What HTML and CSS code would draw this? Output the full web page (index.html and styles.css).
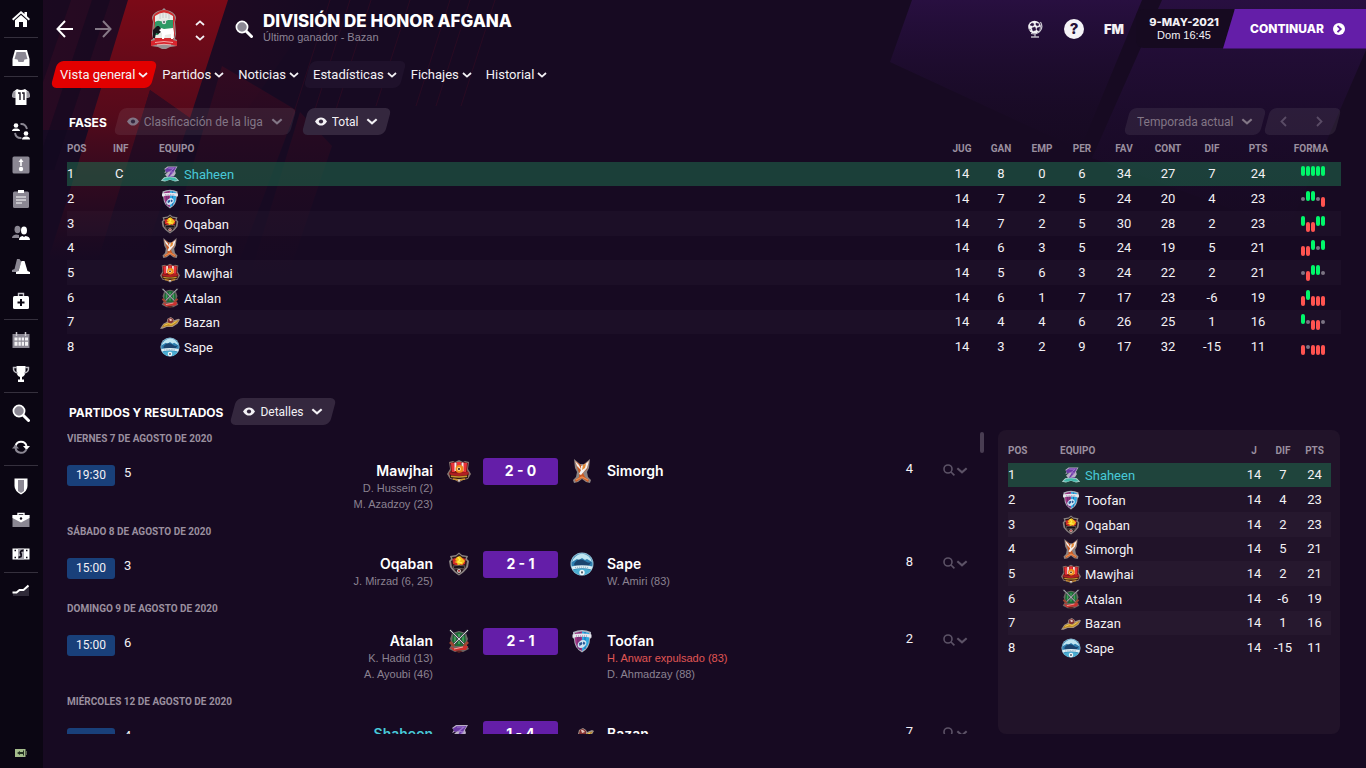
FILE: index.html
```html
<!DOCTYPE html>
<html lang="es">
<head>
<meta charset="utf-8">
<title>División de Honor Afgana</title>
<link rel="stylesheet" href="styles.css">
</head>
<body>
<svg class="defs" aria-hidden="true">
  <symbol id="chev" viewBox="0 0 10 6"><path d="M1 1l4 3.6L9 1" fill="none" stroke="currentColor" stroke-width="1.8"/></symbol>
  <symbol id="eye" viewBox="0 0 12 9"><path d="M0 4.500C2 1 4 .4 6 .4s4 .6 6 4.100C10 8 8 8.600 6 8.600S2 8 0 4.500z" fill="currentColor"/><circle cx="6" cy="4.500" r="2.100" class="eye-hole"/></symbol>
  <symbol id="mag" viewBox="0 0 18 18"><path d="M11 11l5.500 5.500" stroke="#fff" stroke-width="3" stroke-linecap="round"/><circle cx="7" cy="7" r="5.600" fill="#8b8793" stroke="#fff" stroke-width="1.700"/></symbol>
  <symbol id="maglight" viewBox="0 0 12 12"><circle cx="5" cy="5" r="4" fill="none" stroke="currentColor" stroke-width="1.600"/><path d="M8 8l3.400 3.400" stroke="currentColor" stroke-width="1.700"/></symbol>

  <symbol id="shaheen" viewBox="0 0 24 24">
    <path d="M5 6l4-3 12 0-3 5 1 3-3 5 3 2-12 1 1-4-2-2 4-4-5 2 2-3z" fill="#b9aec6"/>
    <path d="M6 6.500l4-2.500 9.500 0-3 5-5 6 6-.500-2 3-8 .500 4-6 2-3.500-6 1.500z" fill="#6b3aa5"/>
    <path d="M10 5l7 0-5 4 4 1-3 3" fill="none" stroke="#9d74cc" stroke-width="1.200"/>
    <path d="M1 20l4-4 7-1 7 1 4 4-5 1-6-2-6 2z" fill="#b5d2cf"/>
    <path d="M2.500 19.500l4-3 5.500-.6 5.500.6 4 3-5 .5-4.500-1.300-4.500 1.300z" fill="#41b8aa"/>
  </symbol>
  <symbol id="toofan" viewBox="0 0 24 24">
    <path d="M3 3q9-4 18 0l0 6-1 1q0 9-8 13.500Q4 19 4 10L3 9z" fill="#aeb0bd"/>
    <path d="M5 4q4-1.500 7-1.500V22Q5 18 5 10z" fill="#a03482"/><path d="M19 4q-4-1.500-7-1.500V22q7-4 7-12z" fill="#2da9e0"/>
    <path d="M8 4v16M10 3v18" stroke="#632c70"/><path d="M15 3v17" stroke="#2066ac"/>
    <path d="M2.500 5.500q9-2 19 0v3.300q-9.500-2-19 0z" fill="#e8e8ee"/><path d="M6 7h12" stroke="#897da0" stroke-dasharray="1 1"/>
    <ellipse cx="12" cy="15" rx="4.800" ry="3.600" transform="rotate(-38 12 15)" fill="#cfe4f2"/><path d="M9 14l3-1 0 2.500-2.500 1.500zM13.500 12.500l2 1.500-1.500 2-1.500-1.500z" fill="#2a5795"/>
  </symbol>
  <symbol id="oqaban" viewBox="0 0 24 24">
    <path d="M12 .5l3 2.500 6 1-1 3 2 2-1 6q-3 5-9 8.500Q6 20 3 15L2 9l2-2-1-3 6-1z" fill="#8a8382"/>
    <path d="M12 2l3 2.500 4 .5-1 3 2 1-1 6q-3 4-7 7-4-3-7-7L4 9l2-1-1-3 4-.5z" fill="#28171a"/>
    <path d="M5.500 7L11 5v9l-5-2zM18.500 7L13 5v9l5-2z" fill="#cf2b29"/>
    <path d="M8 8l2-3 3-1 3 3 2 2-3 4-1-1-3 2-1-3-3-1 3-1z" fill="#f3bf1a"/><path d="M11 5l2 3-2 2 4 1" fill="none" stroke="#fff04c" stroke-width="1.300"/>
    <path d="M6 14q6-1.500 12 0l-1 3q-5-1.500-10 0z" fill="#151018" stroke="#8f8078" stroke-width=".6"/>
    <circle cx="12" cy="19" r="2" fill="#d5cdcb"/><path d="M11 18l2 0-.5 2-1 0z" fill="#b42a2a"/>
  </symbol>
  <symbol id="simorgh" viewBox="0 0 24 24">
    <path d="M4 0l6 5h4l6-5-1 9-2 4 1 5 3 3-1 3-4-1-4-3-4 3-4 1-1-3 3-3 1-5-2-4z" fill="#8f8482"/>
    <path d="M5 2l6 4 1 4 1-4 6-4-2 8-4 4 2 4 4 3-1 2-6-4-6 4-1-2 4-3 0-4z" fill="#c95a24"/>
    <path d="M5 2l4 4 2 4 0-3 3-1 5-4-2 7-6 7-2-1 2-4-4-4z" fill="#f4f1f0"/>
    <path d="M13 6l3-1-1 4-3 2z" fill="#e58a35"/><path d="M6 21l6-3 6 3" fill="none" stroke="#f08b4d" stroke-width="1.300"/>
  </symbol>
  <symbol id="mawjhai" viewBox="0 0 24 24">
    <path d="M2 3l4-1 2 1 4-2 4 2 2-1 4 1-1 7 3 5-3 5-5 1-4 2.500L8 21l-5-1-3-5 3-5z" fill="#85756e"/>
    <path d="M3 4l4-1 5 0 5 0 4 1-1 7 2 4-2 4-8 3-8-3-2-4 2-4z" fill="#7b1618"/>
    <path d="M4 4h4v9H5zM10 3h4v9h-4zM16 4h4l-1 9h-3z" fill="#e93338"/><path d="M7.500 3.500h2V12h-2zM14.500 3.500h2V12h-2z" fill="#f6eeee"/>
    <circle cx="12.500" cy="10" r="4" fill="#ef8c1b"/><circle cx="12" cy="10" r="2" fill="#ffd98a"/><circle cx="12" cy="10" r="1" fill="#241018"/>
    <path d="M2 13q5 2 10 1t10-1l-3 4H5z" fill="#b02021"/><path d="M3 16q9 2 18 0v3q-9 2-18 0z" fill="#2a1a12"/><path d="M4 17.200q8 1.600 16 0M6 20l6 1 6-1" fill="none" stroke="#c9952e" stroke-width="1.400"/><path d="M10.500 20.500h3l-1.500 2.500z" fill="#d9d4d4"/>
  </symbol>
  <symbol id="atalan" viewBox="0 0 24 24">
    <path d="M5 4l7-2 7 2 2 6-2 5 3 5-6 3h-8l-6-3 3-5-2-5z" fill="#6d6765"/>
    <path d="M6 5l6-2 6 2 1 7-3 5H8l-3-5z" fill="#1d6a36"/><path d="M8 5v10M12 5v10M16 5v10" stroke="#3fa75a" stroke-width="1.700"/>
    <path d="M3 1l15 15M21 1L6 16" stroke="#464951" stroke-width="2.200"/><path d="M3 1l15 15M21 1L6 16" stroke="#d2d2d6" stroke-width="1"/>
    <path d="M3 13l4 4M21 13l-4 4" stroke="#9e4630" stroke-width="2.500"/>
    <path d="M3 18l5 1 10-2 3 0-2 4-4 0-8 1z" fill="#cf2f2d"/><path d="M7 20l9-2" stroke="#f3b7ac" stroke-width=".9"/><path d="M8 22q4-1 8 0l-4 2z" fill="#5c211f"/>
  </symbol>
  <symbol id="bazan" viewBox="0 0 24 24">
    <path d="M0 20l4-6 4-2 1-4 4-2 3 2 1 2 5-2 2 1-3 5-6 4-7 0-5 2z" fill="#a4958a"/>
    <path d="M9 12l1-4 3-1 3 2 0 3-4 2z" fill="#833030"/><path d="M11 8l2 0 2 2-3 1z" fill="#e8c7be"/>
    <path d="M2 18.500l3-4 5-1.500 4 1 4-3 5-1.500-4 4.500-5 3-6 0z" fill="#bd8a24"/><path d="M5 16l5-2 4 1 6-4" fill="none" stroke="#f0cd51" stroke-width="1.200"/>
  </symbol>
  <symbol id="sape" viewBox="0 0 24 24">
    <circle cx="12" cy="12" r="11.500" fill="#8dbdd2"/><circle cx="12" cy="12" r="10.500" fill="#2e7fb0"/>
    <path d="M2 10q2-7 10-8.500 8 1 10 8.500l-5-3-2 1-3-2-3 2-2-1z" fill="#bfe6f2"/>
    <path d="M4 12q4-7 11-3 4 3 6 1-1 5-9 5Q4 15 4 12z" fill="#1b446e"/>
    <path d="M1.500 14.500q10.500-2.500 21 0l-1 3q-9.500-2.500-19 0z" fill="#dceef4"/><path d="M5 15.700q7-1.200 14 0" fill="none" stroke="#7fa2b7" stroke-dasharray="1 1"/>
    <path d="M3 18q9-2.500 18 0-3 5-9 5t-9-5z" fill="#4aaed2"/><circle cx="12" cy="20.500" r="2.700" fill="#eef6f9"/><path d="M11 19.500h2l-.5 2h-1z" fill="#234"/>
  </symbol>
</svg>

<div class="app">
  <svg class="backdrop backdrop-left" width="640" height="360" aria-hidden="true">
    <defs>
      <linearGradient id="redFade" x1="0" y1="0" x2="0" y2="1"><stop offset="0" stop-color="#7b0a17"/><stop offset=".45" stop-color="#5a0a1a" stop-opacity=".9"/><stop offset="1" stop-color="#3d0a1e" stop-opacity="0"/></linearGradient>
      <linearGradient id="wineFade" x1="0" y1="0" x2="0" y2="1"><stop offset="0" stop-color="#3a0a20" stop-opacity=".75"/><stop offset="1" stop-color="#250a20" stop-opacity="0"/></linearGradient>
      <linearGradient id="glow" x1="0" y1="0" x2="1" y2="0"><stop offset="0" stop-color="#2c0a22" stop-opacity=".8"/><stop offset="1" stop-color="#2c0a22" stop-opacity="0"/></linearGradient>
    </defs>
    <path d="M43 0h280l-90 130H43z" fill="url(#glow)"/>
    <path d="M43 0h28L43 82zM92 0h18L54 170H43v-22z" fill="#10091f" opacity=".55"/>
    <path d="M128 0h100l-38 118-40-28-52 170H48l19-60z" fill="url(#redFade)"/>
    <path d="M150 90l40 28-46 140H98z" fill="url(#wineFade)"/>
    <path d="M222 66l74 44-60 160h-74zM300 112l32 34-44 130h-38z" fill="url(#wineFade)"/>
    <path d="M330 0l-40 125M350 0l-40 125M371 0l-40 125M410 0l-34 106M450 0l-34 106M470 0l-34 106M495 0l-34 106" stroke="#3b0c24" opacity=".5"/>
  </svg>
  <svg class="backdrop backdrop-right" width="480" height="240" aria-hidden="true">
    <defs><linearGradient id="violetFade" x1="0" y1="0" x2="0" y2="1"><stop offset="0" stop-color="#280f40"/><stop offset="1" stop-color="#1b0b2b" stop-opacity="0"/></linearGradient></defs>
    <path d="M26 0h230l-62 150L4 62z" fill="url(#violetFade)"/>
    <path d="M276 0h204v50l-78 180L206 158z" fill="url(#violetFade)"/>
  </svg>

  <nav class="rail" aria-label="Principal">
    <a class="rail-item" href="#" aria-label="Inicio"><svg width="18" height="18" viewBox="0 0 18 18"><path d="M9 1L0 9l1.300 1.400L9 3.600l7.700 6.800L18 9l-3-2.700V2h-2.500v2z" fill="#fff"/><path d="M9 5l-6 5.300V17h4v-5h4v5h4v-6.700z" fill="#fff"/></svg></a>
    <hr>
    <a class="rail-item" href="#" aria-label="Bandeja de entrada"><svg width="18" height="18" viewBox="0 0 18 18"><path d="M3 1h12l2.500 9v7H.5v-7z" fill="#fff"/><path d="M4.500 3h9l2 7-3 .5-1 2.500h-5l-1-2.500-3-.5z" fill="#8b8793"/></svg></a>
    <hr>
    <a class="rail-item" href="#" aria-label="Plantilla"><svg width="18" height="18" viewBox="0 0 18 18"><path d="M5 1q4 2 8 0l4 3 1 5-3.500 1V17h-11v-7L0 9l1-5z" fill="#fff"/><path d="M1 4l2.500-1v7L0 9zM17 4l-2.500-1v7L18 9z" fill="#9a97a0"/><path d="M6 5h2v7M10 5h2v7" fill="none" stroke="#1b1622" stroke-width="1.400"/></svg></a>
    <a class="rail-item" href="#" aria-label="Dinámica"><svg width="18" height="18" viewBox="0 0 18 18"><circle cx="4" cy="3.500" r="2.300" fill="#fff"/><path d="M0 9q0-2 3-2.500h2Q8 7 8 9z" fill="#fff"/><circle cx="14" cy="11.500" r="2.300" fill="#fff"/><path d="M10 17.500q0-2.500 3-3h2q3 .5 3 3z" fill="#fff"/><path d="M8.500 2q5-.5 6.500 5M9.500 16Q4 16.500 3 11" fill="none" stroke="#8b8793" stroke-width="1.900"/></svg></a>
    <a class="rail-item" href="#" aria-label="Tácticas"><svg width="18" height="18" viewBox="0 0 18 18"><rect x=".5" y=".5" width="17" height="17" rx="1.500" fill="#8b8793"/><path d="M9 10V5" stroke="#fff" stroke-width="1.600"/><path d="M6.500 6L9 2.500 11.500 6z" fill="#fff"/><circle cx="9" cy="13" r="2.200" fill="#fff"/></svg></a>
    <a class="rail-item" href="#" aria-label="Informe"><svg width="18" height="18" viewBox="0 0 18 18"><rect x="1" y="1.500" width="16" height="16.500" rx="1.500" fill="#8b8793"/><path d="M6 0h6v3H6z" fill="#fff"/><path d="M4 7h10M4 10h10M4 13h6" stroke="#fff" stroke-width="1.200"/></svg></a>
    <a class="rail-item" href="#" aria-label="Personal"><svg width="18" height="18" viewBox="0 0 18 18"><ellipse cx="5.500" cy="5.500" rx="3" ry="3.700" fill="#8b8793"/><path d="M0 14q0-3 4-3.500l3 .5v3z" fill="#8b8793"/><ellipse cx="12" cy="6.500" rx="3" ry="3.900" fill="#fff"/><path d="M7 16q0-3.500 3.500-4l1.500 1 1.500-1Q18 12.500 18 16z" fill="#fff"/></svg></a>
    <a class="rail-item" href="#" aria-label="Entrenamiento"><svg width="18" height="18" viewBox="0 0 18 18"><path d="M5 1h2.500l2 3L6 14H0v-2l2.500-1z" fill="#8b8793"/><path d="M9.500 3h3l3 10 2.500 1v2H4v-2l2.500-1z" fill="#fff"/></svg></a>
    <a class="rail-item" href="#" aria-label="Centro médico"><svg width="18" height="18" viewBox="0 0 18 18"><path d="M6.500 4V1.500h5V4" fill="none" stroke="#c9c7cd" stroke-width="1.400"/><rect x="1" y="4" width="16" height="13" rx="1.500" fill="#fff"/><path d="M9 7v7M5.500 10.500h7" stroke="#0b0613" stroke-width="2"/></svg></a>
    <hr>
    <a class="rail-item" href="#" aria-label="Calendario"><svg width="18" height="18" viewBox="0 0 18 18"><path d="M.5 3h17v14H.5z" fill="#8b8793"/><path d="M4.500 1v4M13.500 1v4" stroke="#c9c7cd" stroke-width="1.500"/><path d="M2.500 6.500h3v3h-3zM6.500 6.500h2.300v3H6.500zM9.700 6.500H12v3H9.700zM13 6.500h3v3h-3zM2.500 10.700h3v4h-3zM6.500 10.700h2.300v4H6.500zM9.700 10.700H12v4H9.700zM13 10.700h3v4h-3z" fill="#f2f1f3"/></svg></a>
    <a class="rail-item" href="#" aria-label="Competiciones"><svg width="18" height="18" viewBox="0 0 18 18"><path d="M4.500 1h9v5q0 5-3.500 6v2.500h2V17H6v-2.500h2V12Q4.500 11 4.500 6z" fill="#fff"/><path d="M5 2.500H1.500Q1 7.500 6 8M13 2.500h3.500Q17 7.500 12 8" fill="none" stroke="#bdbbc2" stroke-width="1.500"/></svg></a>
    <hr>
    <a class="rail-item" href="#" aria-label="Ojeo"><svg width="18" height="18"><use href="#mag"/></svg></a>
    <a class="rail-item" href="#" aria-label="Traspasos"><svg width="18" height="18" viewBox="0 0 18 18"><path d="M3.500 8A5.700 5.700 0 0 1 14.500 8" fill="none" stroke="#fff" stroke-width="2"/><path d="M11 8h7l-3.500 4z" fill="#fff"/><path d="M14.500 11A5.700 5.700 0 0 1 3.500 10" fill="none" stroke="#8b8793" stroke-width="2"/><path d="M0 10.500h7L3.500 6.500z" fill="#8b8793"/></svg></a>
    <hr>
    <a class="rail-item" href="#" aria-label="Club"><svg width="18" height="18" viewBox="0 0 18 18"><path d="M2.500 1.500h13V9q0 5-6.500 8.500Q2.500 14 2.500 9z" fill="#fff"/><path d="M6 3h6v11l-3 2-3-2z" fill="#8b8793"/></svg></a>
    <a class="rail-item" href="#" aria-label="Directiva"><svg width="18" height="18" viewBox="0 0 18 18"><path d="M.5 4h17v12H.5z" fill="#8b8793"/><path d="M.5 4h17v3L9 11.500.5 7z" fill="#fff"/><path d="M6 4V2.500h6V4" fill="none" stroke="#fff" stroke-width="1.400"/><circle cx="9" cy="7.500" r="1.200" fill="#0b0613"/></svg></a>
    <a class="rail-item" href="#" aria-label="Finanzas"><svg width="18" height="18" viewBox="0 0 18 18"><path d="M.5 3.500h17v11H.5z" fill="#fff"/><path d="M6 3.500h6v11H6z" fill="#aaa8b0"/><path d="M11.500 5.500Q8 5.500 8.500 8q1.500 1.500.5 3.500L6.500 12.500" fill="none" stroke="#0b0613" stroke-width="1.800"/><path d="M2.500 5.500h1.500M2.500 12.500h1.500M14 5.500h1.500M14 12.500h1.500" stroke="#0b0613" stroke-width="1.500"/></svg></a>
    <hr>
    <a class="rail-item" href="#" aria-label="Desarrollo"><svg width="18" height="18" viewBox="0 0 18 18"><path d="M1 9l4-1 3-3 4 0 5-3v10H1z" fill="#2f2a38"/><path d="M.5 8.500h4l3-2.500h4l5-4.500" fill="none" stroke="#fff" stroke-width="2"/></svg></a>
    <a class="rail-item rail-foot" href="#" aria-label="Estado"><svg width="12" height="8" viewBox="0 0 12 8"><path d="M0 0h10.500v8H0z" fill="#a5bd8c"/><path d="M11 2h1v4h-1z" fill="#56604e"/><path d="M2 4l3-2v1h3V1.500h1v5H8V5H5v1z" fill="#223020"/></svg></a>
  </nav>

  <main class="page">
    <header class="top">
      <button class="plain" aria-label="Atrás"><svg width="18" height="18" viewBox="0 0 18 18"><path d="M17 9H2M9 1L1.500 9 9 17" fill="none" stroke="#fff" stroke-width="2"/></svg></button>
      <button class="plain dim" aria-label="Adelante"><svg width="18" height="18" viewBox="0 0 18 18"><path d="M1 9h15M9 1l7.500 8L9 17" fill="none" stroke="#fff" stroke-width="2"/></svg></button>
      <svg class="league" width="28" height="42" viewBox="0 0 28 42" aria-hidden="true">
        <path d="M8 3l4-1 2-2 2 2 4 1q6 3 6 7l-1 4 1 12-1 5 2 1v6l-7 1-4 2h-4l-4-2-7-1v-6l2-1-1-5 1-12-1-4q0-4 6-7z" fill="#9a9192"/>
        <path d="M8 4q6-4 12 0 5 2 5 7l-1 4 1 12-2 5H5l-2-5 1-12-1-4q0-5 5-7z" fill="#cf2d2f"/>
        <path d="M5 8q9-7 18 0v8l1 14H4l1-14z" fill="#e9ebe7"/><path d="M5 14q3-2 5-1l4 1 4-2 5 0v9H12l-4 6H4z" fill="#2f9a66"/>
        <path d="M10 6v5M13 5v5M16 5v5M19 6v5" stroke="#c9c9cb"/><circle cx="14" cy="14" r="2.200" fill="#dfe3e2"/><circle cx="14" cy="14" r="1" fill="#555c60"/>
        <path d="M7 21l4-1 3 1 9-1 1 5-1 6h-2v-5l-6 1-1 4h-2v-6l-3-1z" fill="#fff"/><path d="M3 30v-8l4-4 2 0 2 3-2 1 2 2-3 2-2-1-1 5z" fill="#16161a"/>
        <path d="M1 33q13-4 26 0v5q-13-4-26 0z" fill="#d8252d"/><path d="M5 34.500q9-2 18 0M7 37q7-1.500 14 0" fill="none" stroke="#f4b4b2" stroke-width=".9"/>
      </svg>
      <span class="steps">
        <button class="plain" aria-label="Anterior"><svg class="flip" width="10" height="6"><use href="#chev"/></svg></button>
        <button class="plain" aria-label="Siguiente"><svg width="10" height="6"><use href="#chev"/></svg></button>
      </span>
      <button class="plain find" aria-label="Buscar"><svg width="18" height="18"><use href="#mag"/></svg></button>
      <div class="heading"><h1>DIVISIÓN DE HONOR AFGANA</h1><p>Último ganador - Bazan</p></div>
      <div class="tools">
        <button class="plain" aria-label="Mundo"><svg width="18" height="18" viewBox="0 0 18 18"><circle cx="8.500" cy="7" r="6.300" fill="#f2f1f4"/><path d="M4 5l2-2 2 1-1 2zM10 3l3 1-1 2-2-1zM6 8l3-1 1 3-3 1zM11 8l3-1-1 4-2-1zM3 9l2 1" fill="#2a1540" stroke="#2a1540" stroke-width=".5"/><path d="M14.500 2q3 5-.5 9-3 4-9 2.500" fill="none" stroke="#cfcbd4" stroke-width="1.200"/><path d="M9 13.500V17M5 17h8" stroke="#b9b4c0" stroke-width="1.300"/></svg></button>
        <button class="plain help">?</button>
        <button class="plain fm">FM</button>
      </div>
      <div class="date"><strong>9-MAY-2021</strong><span>Dom 16:45</span></div>
      <button class="continue">CONTINUAR <svg width="12" height="12" viewBox="0 0 12 12"><circle cx="6" cy="6" r="6" fill="#fff"/><path d="M4.500 2.800L7.800 6 4.500 9.200" fill="none" stroke="#641ea8" stroke-width="1.800"/></svg></button>
    </header>

    <nav class="tabs" aria-label="Secciones">
      <button class="tab active">Vista general<svg width="10" height="6"><use href="#chev"/></svg></button>
      <button class="tab">Partidos<svg width="10" height="6"><use href="#chev"/></svg></button>
      <button class="tab">Noticias<svg width="10" height="6"><use href="#chev"/></svg></button>
      <button class="tab hover">Estadísticas<svg width="10" height="6"><use href="#chev"/></svg></button>
      <button class="tab">Fichajes<svg width="10" height="6"><use href="#chev"/></svg></button>
      <button class="tab">Historial<svg width="10" height="6"><use href="#chev"/></svg></button>
    </nav>

    <section class="stage">
      <div class="bar">
        <h2>FASES</h2>
        <label class="pick off"><svg width="12" height="9"><use href="#eye"/></svg><select aria-label="Fase" disabled><option>Clasificación de la liga</option></select><svg width="12" height="7"><use href="#chev"/></svg></label>
        <label class="pick on"><svg width="12" height="9"><use href="#eye"/></svg><select aria-label="Ámbito"><option>Total</option></select><svg width="12" height="7"><use href="#chev"/></svg></label>
        <label class="pick off season"><select aria-label="Temporada" disabled><option>Temporada actual</option></select><svg width="12" height="7"><use href="#chev"/></svg></label>
        <span class="pager"><button class="plain" aria-label="Temporada anterior" disabled><svg width="7" height="11" viewBox="0 0 7 11"><path d="M6 1L1.500 5.500 6 10" fill="none" stroke="currentColor" stroke-width="1.800"/></svg></button><button class="plain" aria-label="Temporada siguiente" disabled><svg width="7" height="11" viewBox="0 0 7 11"><path d="M1 1l4.500 4.500L1 10" fill="none" stroke="currentColor" stroke-width="1.800"/></svg></button></span>
      </div>
      <table class="league-table full">
        <colgroup><col class="c46"><col class="c46"><col><col class="c38"><col class="c40"><col class="c42"><col class="c38"><col class="c46"><col class="c42"><col class="c46"><col class="c46"><col class="c60"></colgroup>
        <thead><tr><th>POS</th><th>INF</th><th class="team">EQUIPO</th><th>JUG</th><th>GAN</th><th>EMP</th><th>PER</th><th>FAV</th><th>CONT</th><th>DIF</th><th>PTS</th><th>FORMA</th></tr></thead>
        <tbody>
          <tr class="mine"><td>1</td><td>C</td><td class="team"><svg><use href="#shaheen"/></svg>Shaheen</td><td>14</td><td>8</td><td>0</td><td>6</td><td>34</td><td>27</td><td>7</td><td>24</td><td><span class="form"><i class="w"></i><i class="w"></i><i class="w"></i><i class="w"></i><i class="w"></i></span></td></tr>
          <tr><td>2</td><td></td><td class="team"><svg><use href="#toofan"/></svg>Toofan</td><td>14</td><td>7</td><td>2</td><td>5</td><td>24</td><td>20</td><td>4</td><td>23</td><td><span class="form"><i class="d"></i><i class="w"></i><i class="w"></i><i class="d"></i><i class="l"></i></span></td></tr>
          <tr><td>3</td><td></td><td class="team"><svg><use href="#oqaban"/></svg>Oqaban</td><td>14</td><td>7</td><td>2</td><td>5</td><td>30</td><td>28</td><td>2</td><td>23</td><td><span class="form"><i class="w"></i><i class="l"></i><i class="l"></i><i class="w"></i><i class="w"></i></span></td></tr>
          <tr><td>4</td><td></td><td class="team"><svg><use href="#simorgh"/></svg>Simorgh</td><td>14</td><td>6</td><td>3</td><td>5</td><td>24</td><td>19</td><td>5</td><td>21</td><td><span class="form"><i class="l"></i><i class="l"></i><i class="w"></i><i class="d"></i><i class="w"></i></span></td></tr>
          <tr><td>5</td><td></td><td class="team"><svg><use href="#mawjhai"/></svg>Mawjhai</td><td>14</td><td>5</td><td>6</td><td>3</td><td>24</td><td>22</td><td>2</td><td>21</td><td><span class="form"><i class="d"></i><i class="l"></i><i class="w"></i><i class="w"></i><i class="d"></i></span></td></tr>
          <tr><td>6</td><td></td><td class="team"><svg><use href="#atalan"/></svg>Atalan</td><td>14</td><td>6</td><td>1</td><td>7</td><td>17</td><td>23</td><td>-6</td><td>19</td><td><span class="form"><i class="l"></i><i class="w"></i><i class="l"></i><i class="l"></i><i class="l"></i></span></td></tr>
          <tr><td>7</td><td></td><td class="team"><svg><use href="#bazan"/></svg>Bazan</td><td>14</td><td>4</td><td>4</td><td>6</td><td>26</td><td>25</td><td>1</td><td>16</td><td><span class="form"><i class="w"></i><i class="d"></i><i class="l"></i><i class="l"></i><i class="d"></i></span></td></tr>
          <tr><td>8</td><td></td><td class="team"><svg><use href="#sape"/></svg>Sape</td><td>14</td><td>3</td><td>2</td><td>9</td><td>17</td><td>32</td><td>-15</td><td>11</td><td><span class="form"><i class="l"></i><i class="d"></i><i class="l"></i><i class="l"></i><i class="l"></i></span></td></tr>
        </tbody>
      </table>
    </section>

    <section class="results">
      <div class="bar">
        <h2>PARTIDOS Y RESULTADOS</h2>
        <label class="pick on"><svg width="12" height="9"><use href="#eye"/></svg><select aria-label="Vista de partidos"><option>Detalles</option></select><svg width="12" height="7"><use href="#chev"/></svg></label>
      </div>
      <div class="split">
        <div class="fixtures">
          <div class="list">
            <h3>VIERNES 7 DE AGOSTO DE 2020</h3>
            <article class="match">
              <span class="time">19:30</span><span class="tv">5</span>
              <div class="side home"><b>Mawjhai</b><span>D. Hussein (2)</span><span>M. Azadzoy (23)</span></div>
              <svg class="crest"><use href="#mawjhai"/></svg><a class="score" href="#">2 - 0</a><svg class="crest"><use href="#simorgh"/></svg>
              <div class="side"><b>Simorgh</b></div>
              <span class="crowd">4</span><button class="plain more" aria-label="Más opciones"><svg width="12" height="12"><use href="#maglight"/></svg><svg width="12" height="7"><use href="#chev"/></svg></button>
            </article>
            <h3>SÁBADO 8 DE AGOSTO DE 2020</h3>
            <article class="match">
              <span class="time">15:00</span><span class="tv">3</span>
              <div class="side home"><b>Oqaban</b><span>J. Mirzad (6, 25)</span></div>
              <svg class="crest"><use href="#oqaban"/></svg><a class="score" href="#">2 - 1</a><svg class="crest"><use href="#sape"/></svg>
              <div class="side"><b>Sape</b><span>W. Amiri (83)</span></div>
              <span class="crowd">8</span><button class="plain more" aria-label="Más opciones"><svg width="12" height="12"><use href="#maglight"/></svg><svg width="12" height="7"><use href="#chev"/></svg></button>
            </article>
            <h3>DOMINGO 9 DE AGOSTO DE 2020</h3>
            <article class="match">
              <span class="time">15:00</span><span class="tv">6</span>
              <div class="side home"><b>Atalan</b><span>K. Hadid (13)</span><span>A. Ayoubi (46)</span></div>
              <svg class="crest"><use href="#atalan"/></svg><a class="score" href="#">2 - 1</a><svg class="crest"><use href="#toofan"/></svg>
              <div class="side"><b>Toofan</b><span class="red">H. Anwar expulsado (83)</span><span>D. Ahmadzay (88)</span></div>
              <span class="crowd">2</span><button class="plain more" aria-label="Más opciones"><svg width="12" height="12"><use href="#maglight"/></svg><svg width="12" height="7"><use href="#chev"/></svg></button>
            </article>
            <h3>MIÉRCOLES 12 DE AGOSTO DE 2020</h3>
            <article class="match">
              <span class="time"></span><span class="tv">4</span>
              <div class="side home own"><b>Shaheen</b></div>
              <svg class="crest"><use href="#shaheen"/></svg><a class="score" href="#">1 - 4</a><svg class="crest"><use href="#bazan"/></svg>
              <div class="side"><b>Bazan</b></div>
              <span class="crowd">7</span><button class="plain more" aria-label="Más opciones"><svg width="12" height="12"><use href="#maglight"/></svg><svg width="12" height="7"><use href="#chev"/></svg></button>
            </article>
          </div>
          <div class="track"><div class="thumb"></div></div>
        </div>
        <aside class="panel">
          <table class="league-table mini">
            <colgroup><col class="c52"><col><col class="c28"><col class="c30"><col class="c33"></colgroup>
            <thead><tr><th>POS</th><th class="team">EQUIPO</th><th>J</th><th>DIF</th><th>PTS</th></tr></thead>
            <tbody>
              <tr class="mine"><td>1</td><td class="team"><svg><use href="#shaheen"/></svg>Shaheen</td><td>14</td><td>7</td><td>24</td></tr>
              <tr><td>2</td><td class="team"><svg><use href="#toofan"/></svg>Toofan</td><td>14</td><td>4</td><td>23</td></tr>
              <tr><td>3</td><td class="team"><svg><use href="#oqaban"/></svg>Oqaban</td><td>14</td><td>2</td><td>23</td></tr>
              <tr><td>4</td><td class="team"><svg><use href="#simorgh"/></svg>Simorgh</td><td>14</td><td>5</td><td>21</td></tr>
              <tr><td>5</td><td class="team"><svg><use href="#mawjhai"/></svg>Mawjhai</td><td>14</td><td>2</td><td>21</td></tr>
              <tr><td>6</td><td class="team"><svg><use href="#atalan"/></svg>Atalan</td><td>14</td><td>-6</td><td>19</td></tr>
              <tr><td>7</td><td class="team"><svg><use href="#bazan"/></svg>Bazan</td><td>14</td><td>1</td><td>16</td></tr>
              <tr><td>8</td><td class="team"><svg><use href="#sape"/></svg>Sape</td><td>14</td><td>-15</td><td>11</td></tr>
            </tbody>
          </table>
        </aside>
      </div>
    </section>
  </main>
</div>
</body>
</html>
```
FILE: styles.css
```css
* { box-sizing: border-box; }
body {
  margin: 0;
  background: #170a22;
  color: #f3f1f5;
  font: 13px/16px Roboto, "Liberation Sans", sans-serif;
}
h1, h2, h3, p { margin: 0; }
button, select { font: inherit; color: inherit; border: 0; background: none; padding: 0; margin: 0; opacity: 1; }
.defs { display: none; }
.plain { display: inline-flex; align-items: center; justify-content: center; }

.app { position: relative; display: flex; height: 100vh; overflow: hidden; }
.backdrop { position: absolute; top: 0; }
.backdrop-left { left: 0; }
.backdrop-right { right: 0; }

/* side rail */
.rail { position: relative; flex: 0 0 43px; display: flex; flex-direction: column; padding-top: 2px; background: #0b0613; }
.rail-item { flex: 0 0 34px; display: flex; align-items: center; justify-content: center; padding-right: 2px; }
.rail hr { width: 34px; height: 1px; margin: 1px 0 3px 4px; border: 0; background: #35303d; }
.rail-foot { flex-basis: 30px; margin-top: auto; }

.page { position: relative; flex: 1; min-width: 0; display: flex; flex-direction: column; padding-bottom: 34px; }

/* header */
.top { display: flex; align-items: center; height: 57px; padding-left: 13px; }
.top .plain { flex: none; }
.dim { margin-left: 20px; opacity: .45; }
.league { margin-left: 38px; flex: none; }
.steps { display: flex; flex-direction: column; gap: 9px; margin: 4px 0 0 17px; }
.flip { transform: rotate(180deg); }
.find { margin-left: 30px; }
.heading { flex: 1; margin: 0 0 2px 10px; white-space: nowrap; }
.heading h1 { font: 800 17px/18px Inter, sans-serif; color: #fff; }
.heading p { color: #8d8495; font: 11px/14px "Liberation Sans", sans-serif; }
.tools { display: flex; align-items: center; gap: 20px; margin-right: 12px; }
.help { width: 20px; height: 20px; border-radius: 50%; background: #f5f3f7; color: #241035; font: 800 15px/20px Inter, sans-serif; }
.fm { font: 900 13px/16px Inter, sans-serif; }
.date { display: flex; flex-direction: column; align-items: center; justify-content: center; width: 98px; height: 39px; margin-right: -11px; padding-right: 2px; border-radius: 8px 0 0 8px; background: #160a20; font: 11px/13px "Liberation Sans", sans-serif; }
.date strong { font: 800 11px/13px Inter, sans-serif; }
.continue { display: flex; align-items: center; justify-content: center; gap: 9px; height: 40px; width: 143px; padding-left: 6px; background: #641ea8; color: #fff; font: 800 12px/16px Inter, sans-serif; clip-path: polygon(12px 0, 100% 0, 100% 100%, 0 100%); }

/* section tabs */
.tabs { display: flex; margin-top: 4px; padding-left: 10px; }
.tab { position: relative; z-index: 0; display: flex; align-items: center; gap: 3px; height: 27px; padding: 0 7px; }
.active::before, .hover::before, .pick::before, .pager::before {
  content: ""; position: absolute; z-index: -1; inset: 0 3px 0 3px; border-radius: 6px; transform: skewX(-15deg);
}
.active::before, .hover::before { inset: 0 1px; }
.active::before { background: #e20000; }
.hover::before { background: #1f112b; }

/* section bars */
.bar { display: flex; align-items: center; height: 27px; padding: 0 1px 0 2px; }
.bar h2 { font: 700 12px/16px Inter, sans-serif; color: #fff; padding-top: 2px; }
.pick { position: relative; z-index: 0; display: flex; align-items: center; gap: 5px; height: 27px; margin-left: 8px; padding: 0 12px; font: 12px/16px Roboto, sans-serif; }
.pick::before { inset: 0 2px; }
.pick select { appearance: none; }
.pick select + svg { margin-left: 2px; }
.eye-hole { fill: #34273e; }
.on::before { background: #34273e; }
.off { color: #827686; }
.off::before { background: rgba(255, 255, 255, .07); }
.pager { position: relative; z-index: 0; display: flex; height: 27px; padding-right: 3px; color: #5a4c66; }
.pager::before { inset: 0 2px; background: rgba(255, 255, 255, .07); }
.pager .plain { width: 36px; }
.stage .season { margin-left: auto; }

/* tables */
.stage { margin: 20px 25px 0 24px; }
.league-table { width: 100%; table-layout: fixed; border-collapse: separate; border-spacing: 0; }
.league-table th { padding: 0; font: 700 10px/16px Roboto, sans-serif; color: #9a8f9f; text-align: center; }
.league-table td { padding: 0; height: 25px; text-align: center; }
.league-table th:first-child, .league-table td:first-child, .league-table .team { text-align: left; }
.full th { height: 27px; }
.full th:nth-child(2), .full td:nth-child(2) { text-align: left; }
.full td:nth-child(2) { padding-left: 2px; }
.mini th { height: 24px; }
.league-table tr:nth-child(3n+1) td { height: 24px; }
.league-table tbody tr:nth-child(odd) td { background: rgba(255, 255, 255, .025); }
.league-table tbody tr.mine td { background: rgba(31, 113, 78, .52); }
.mine .team { color: #48c9d8; }
td.team svg { width: 20px; height: 20px; margin: 0 4px 0 1px; vertical-align: -5px; }
.c28 { width: 28px; } .c30 { width: 30px; } .c33 { width: 33px; } .c38 { width: 38px; }
.c40 { width: 40px; } .c42 { width: 42px; } .c46 { width: 46px; } .c52 { width: 52px; } .c60 { width: 60px; }
.form { display: flex; justify-content: center; gap: 1px; height: 16px; padding-left: 3px; }
.form i { width: 4px; height: 10px; border-radius: 2px; }
.form .w { background: #00f76a; }
.form .l { background: #ff5350; align-self: flex-end; }
.form .d { height: 4px; background: #7c7484; align-self: center; }

/* fixtures */
.results { flex: 1; min-height: 0; display: flex; flex-direction: column; margin: 39px 26px 0 24px; }
.results .bar { flex: none; }
.split { flex: 1; min-height: 0; display: flex; gap: 14px; }
.fixtures { flex: 1; min-width: 0; display: flex; gap: 6px; overflow: hidden; }
.list { flex: 1; }
.list h3 { height: 28px; padding-top: 6px; font: 700 10px/16px Roboto, sans-serif; color: #9a8f9f; }
.match { display: grid; grid-template-columns: 48px 43px 1fr 36px 75px 36px 1fr 30px 61px; align-items: start; padding: 5px 0 6px; }
.time { height: 21px; margin-top: 7px; border-radius: 3px; background: #19407a; text-align: center; font: 12px/21px Roboto, sans-serif; }
.tv { padding: 7px 0 0 9px; }
.side { display: flex; flex-direction: column; padding: 3px 0 0 13px; font: 11px/16px "Liberation Sans", sans-serif; color: #8b8291; }
.home { padding: 3px 14px 0 0; text-align: right; }
.side b { font: 600 14px/19px Inter, sans-serif; color: #fff; }
.side.own b { color: #48c9d8; }
.side .red { color: #e05654; }
.crest { width: 24px; height: 26px; }
.score + .crest { justify-self: end; }
.score { height: 27px; border-radius: 3px; background: #641ea8; color: #fff; text-align: center; text-decoration: none; font: 700 14px/25px Inter, sans-serif; }
.crowd { padding-top: 3px; text-align: right; }
.more { justify-self: start; gap: 1px; margin: 6px 0 0 30px; color: #5c5266; }
.track { width: 4px; padding-top: 7px; }
.thumb { height: 21px; border-radius: 2px; background: #493d52; }
.panel { flex: 0 0 342px; margin-top: 5px; padding: 9px 9px 0 10px; border-radius: 8px; background: #211329; }
```
